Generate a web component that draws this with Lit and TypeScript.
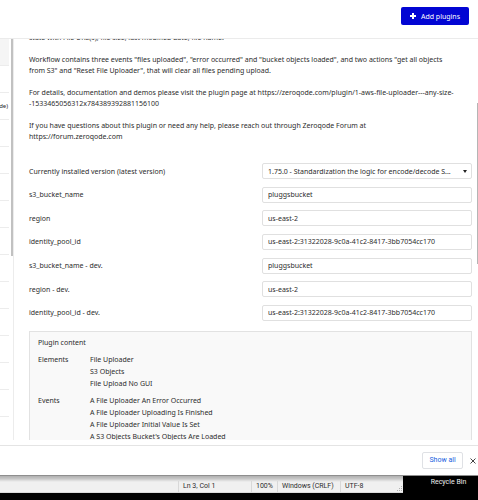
import { LitElement, html, css } from "lit";
import { customElement } from "lit/decorators.js";

const FIELDS = [
  ["s3_bucket_name", "pluggsbucket"],
  ["region", "us-east-2"],
  ["identity_pool_id", "us-east-2:31322028-9c0a-41c2-8417-3bb7054cc170"],
  ["s3_bucket_name - dev.", "pluggsbucket"],
  ["region - dev.", "us-east-2"],
  ["identity_pool_id - dev.", "us-east-2:31322028-9c0a-41c2-8417-3bb7054cc170"],
];

const CONTENT: [string, string[]][] = [
  ["Elements", ["File Uploader", "S3 Objects", "File Upload No GUI"]],
  [
    "Events",
    [
      "A File Uploader An Error Occurred",
      "A File Uploader Uploading Is Finished",
      "A File Uploader Initial Value Is Set",
      "A S3 Objects Bucket's Objects Are Loaded",
    ],
  ],
];

const SIDE_ROWS = ["", "", "de)", "", "", "", "", "", "", "", "", "", "", "", ""];

@customElement("app-root")
export class AppRoot extends LitElement {
  static styles = css`
    :host {
      display: flex;
      flex-direction: column;
      height: 100vh;
      overflow: hidden;
      background: #fff;
      color: #2c2c2c;
      font: 7px/11px "Noto Sans", sans-serif;
    }
    * {
      box-sizing: border-box;
    }
    button,
    input,
    select {
      font: inherit;
      color: inherit;
      margin: 0;
    }
    .top {
      flex: none;
      display: flex;
      justify-content: flex-end;
      align-items: flex-start;
      height: 39px;
      padding: 7px 9px;
      border-bottom: 1px solid #ebebeb;
    }
    .add {
      display: flex;
      align-items: center;
      justify-content: center;
      gap: 5px;
      width: 68px;
      height: 18px;
      padding: 0;
      border: 0;
      border-radius: 2px;
      background: #0205d3;
      color: #fff;
    }
    .main {
      position: relative;
      flex: 1;
      min-height: 0;
      display: flex;
      overflow: hidden;
    }
    .side {
      flex: none;
      width: 14px;
      padding-right: 4px;
      border-right: 1px solid #ececec;
    }
    .side-row {
      height: 27px;
      border-bottom: 1px solid #ececec;
      display: flex;
      align-items: center;
      justify-content: flex-end;
      padding-right: 1px;
      font-size: 6px;
    }
    .side-row.active {
      background: #f5f5f5;
    }
    .side-thumb {
      position: absolute;
      left: 11px;
      top: 0;
      width: 2px;
      height: 54%;
      background: #c1c1c1;
    }
    .page-thumb {
      position: absolute;
      right: 0;
      top: 16%;
      width: 1px;
      height: 40%;
      background: #b5b5b5;
    }
    .body {
      flex: 1;
      min-width: 0;
      padding: 0 6px 0 15px;
      margin-top: -7px;
    }
    p {
      margin: 0 0 11px;
    }
    .fields {
      display: flex;
      flex-direction: column;
      justify-content: space-between;
      height: 158px;
      margin-top: 21px;
    }
    .field {
      display: grid;
      grid-template-columns: 233fr 210fr;
      align-items: center;
    }
    .box {
      width: 100%;
      height: 16px;
      padding: 0 5px;
      border: 1px solid #e0e0e0;
      border-radius: 2px;
      background: #fff;
      outline: 0;
    }
    .pick {
      position: relative;
      display: flex;
    }
    select.box {
      appearance: none;
      padding-right: 13px;
    }
    .caret {
      position: absolute;
      right: 5px;
      top: 7px;
      border: 2px solid transparent;
      border-top: 3px solid #222;
      border-bottom: 0;
    }
    .panel {
      margin-top: 10px;
      padding: 5px 8px;
      border: 1px solid #e2e2e2;
      background: #f9f9f9;
      line-height: 12px;
    }
    .group {
      display: grid;
      grid-template-columns: 52px 1fr;
      margin-top: 5px;
    }
    .title,
    dl,
    dd {
      margin: 0;
    }
    .title {
      font: inherit;
    }
    .downloads {
      flex: none;
      display: flex;
      justify-content: flex-end;
      align-items: center;
      gap: 7px;
      height: 30px;
      margin-top: 5px;
      padding-right: 2px;
      border-top: 1px solid #e4e4e4;
      font-family: Roboto, sans-serif;
    }
    .show {
      width: 41px;
      height: 17px;
      padding: 0;
      border: 1px solid #dfe1e5;
      border-radius: 2px;
      background: #fff;
      color: #1a5fe0;
    }
    .close {
      display: flex;
      padding: 0;
      border: 0;
      background: none;
    }
    .desktop {
      flex: none;
      display: grid;
      grid-template-columns: 403fr 75fr;
      align-items: start;
      height: 25px;
      border-top: 1px solid #8e8e8e;
      background: #000;
      font-family: Roboto, sans-serif;
      white-space: nowrap;
    }
    .status {
      display: flex;
      justify-content: flex-end;
      position: relative;
      height: 17px;
      padding-top: 5px;
      background: linear-gradient(#b0b0b0, #c8c8c8 3px, #d8d8d8 4px, #f0f0f0 6px);
      border-bottom: 1px solid #dadada;
    }
    .cell {
      padding-left: 4px;
      border-left: 1px solid #d8d8d8;
    }
    .line {
      width: 73px;
    }
    .zoom {
      width: 26px;
    }
    .eol,
    .enc {
      width: 63px;
    }
    .grip {
      position: absolute;
      right: 1px;
      bottom: 1px;
    }
    .bin {
      padding: 1px 0 0 16px;
      text-align: center;
      color: #eee;
    }
  `;

  render() {
    return html`
      <header class="top">
        <button class="add">
          <svg width="6" height="6" viewBox="0 0 6 6"><path d="M3 0v6M0 3h6" stroke="#fff" stroke-width="2" /></svg>
          Add plugins
        </button>
      </header>
      <main class="main">
        <nav class="side">
          ${SIDE_ROWS.map((t, i) => html`<div class="side-row ${i === 0 ? "active" : ""}">${t}</div>`)}
        </nav>
        <div class="side-thumb"></div>
        <section class="body">
          <p>state with File URL(s), file size, last modified date, file name.</p>
          <p>
            Workflow contains three events "files uploaded", "error occurred" and "bucket objects loaded", and two actions "get all objects<br />from
            S3" and "Reset File Uploader", that will clear all files pending upload.
          </p>
          <p>
            For details, documentation and demos please visit the plugin page at https://zeroqode.com/plugin/1-aws-file-uploader---any-size-<br />-1533465056312x784389392881156100
          </p>
          <p>
            If you have questions about this plugin or need any help, please reach out through Zeroqode Forum at<br />https://forum.zeroqode.com
          </p>
          <div class="fields">
            <div class="field">
              <label for="version">Currently installed version (latest version)</label>
              <div class="pick">
                <select class="box" id="version">
                  <option>1.75.0 - Standardization the logic for encode/decode S...</option>
                </select>
                <span class="caret"></span>
              </div>
            </div>
            ${FIELDS.map(
              ([name, value], i) => html`<div class="field">
                <label for="field-${i}">${name}</label>
                <input class="box" id="field-${i}" type="text" .value=${value} />
              </div>`
            )}
          </div>
          <div class="panel">
            <h2 class="title">Plugin content</h2>
            ${CONTENT.map(
              ([name, items]) => html`<dl class="group">
                <dt>${name}</dt>
                <dd>${items.map((t) => html`<div>${t}</div>`)}</dd>
              </dl>`
            )}
          </div>
        </section>
        <div class="page-thumb"></div>
      </main>
      <div class="downloads">
        <button class="show">Show all</button>
        <button class="close" aria-label="Close">
          <svg width="6" height="6" viewBox="0 0 6 6"><path d="M.5 .5l5 5M5.5 .5l-5 5" stroke="#444" stroke-width="1" /></svg>
        </button>
      </div>
      <footer class="desktop">
        <div class="status">
          <span class="cell line">Ln 3, Col 1</span>
          <span class="cell zoom">100%</span>
          <span class="cell eol">Windows (CRLF)</span>
          <span class="cell enc">UTF-8</span>
          <svg class="grip" width="5" height="5" viewBox="0 0 5 5"><path d="M4 0h1v1H4zM2 2h1v1H2zM4 2h1v1H4zM0 4h1v1H0zM2 4h1v1H2zM4 4h1v1H4z" fill="#b0b0b0" /></svg>
        </div>
        <div class="bin">Recycle Bin</div>
      </footer>
    `;
  }
}
